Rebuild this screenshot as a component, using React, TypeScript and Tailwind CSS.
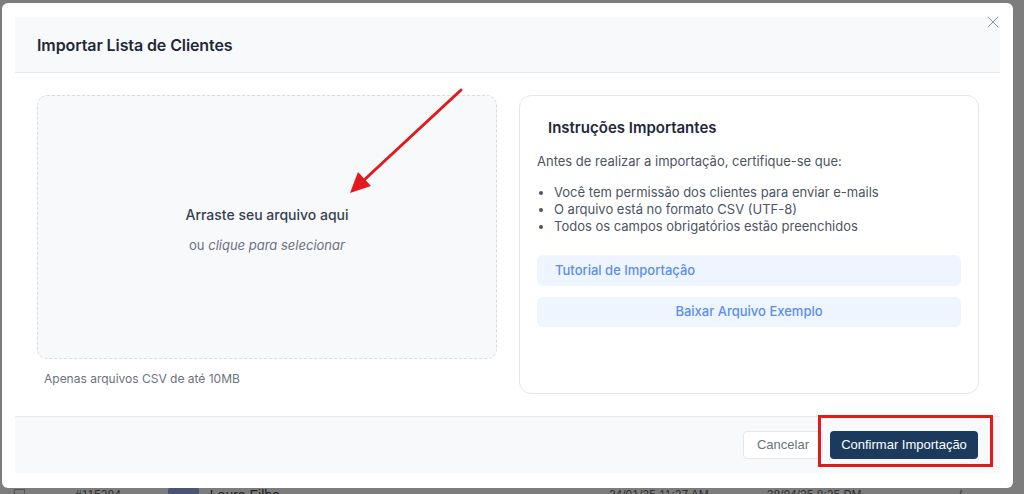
import { X } from "lucide-react";

const REQUISITOS = [
  "Você tem permissão dos clientes para enviar e-mails",
  "O arquivo está no formato CSV (UTF-8)",
  "Todos os campos obrigatórios estão preenchidos",
];

function SetaVermelha() {
  return (
    <svg
      className="absolute left-[340px] top-[80px] pointer-events-none"
      width="130"
      height="120"
      viewBox="0 0 130 120"
    >
      <line x1="119" y1="7" x2="21" y2="98" stroke="#e4191c" strokeWidth="3" strokeLinecap="round" />
      <polygon points="8,110 29,103 16,89" fill="#e4191c" />
    </svg>
  );
}

export default function App() {
  return (
    <div
      className="w-[1024px] h-[494px] overflow-hidden bg-[#7d7d7d] flex flex-col pt-[3px] pl-[2px]"
      style={{ fontFamily: "Inter, 'Noto Sans', sans-serif" }}
    >
      <div className="relative w-[1011px] h-[485px] shrink-0 bg-white rounded-[6px] px-[13px] pt-[14px] flex flex-col">
        {/* cabeçalho */}
        <div className="h-[56px] shrink-0 bg-[#f8f9fb] border-b border-[#e6e9ee] px-[22px] flex items-center">
          <h1 className="text-[16px] font-semibold text-[#1f2937] tracking-[-0.1px]">Importar Lista de Clientes</h1>
        </div>

        <button className="absolute left-[981px] top-[9px] text-[#8f949c]">
          <X size={20} strokeWidth={1.2} />
        </button>

        {/* corpo */}
        <div className="flex gap-[22px] pl-[22px] pr-[21px] py-[22px]">
          <div className="w-[460px] shrink-0 flex flex-col">
            <div className="h-[264px] rounded-[10px] border border-dashed border-[#d7dbe2] bg-[#f8f9fb] flex flex-col items-center justify-center pt-[5px]">
              <p className="text-[14px] leading-[20px] font-medium text-[#374151]">Arraste seu arquivo aqui</p>
              <p className="mt-[10px] text-[13px] leading-[20px] text-[#6b7280]">
                ou <span className="italic">clique para selecionar</span>
              </p>
            </div>
            <p className="mt-[13px] pl-[7px] text-[12px] leading-[14px] text-[#6b7280]">Apenas arquivos CSV de até 10MB</p>
          </div>

          <div className="w-[460px] shrink-0 h-[299px] rounded-[12px] border border-[#e5e7eb] px-[17px] pt-[20px]">
            <h2 className="pl-[11px] text-[15px] leading-[24px] font-semibold text-[#1f2937]">Instruções Importantes</h2>
            <p className="mt-[11px] text-[13px] leading-[20px] text-[#4b5563]">
              Antes de realizar a importação, certifique-se que:
            </p>
            <ul className="mt-[13px] pl-[2px]">
              {REQUISITOS.map((r) => (
                <li key={r} className="flex items-center gap-[11px] text-[13px] leading-[17px] text-[#4b5563]">
                  <span className="w-[4px] h-[4px] rounded-full bg-[#4b5563]" />
                  {r}
                </li>
              ))}
            </ul>
            <button className="mt-[20px] w-full h-[31px] rounded-[6px] bg-[#eef5ff] px-[18px] text-left text-[13px] font-medium text-[#5b8ef0]">
              Tutorial de Importação
            </button>
            <button className="mt-[11px] w-full h-[30px] rounded-[6px] bg-[#eef5ff] text-center text-[13px] font-medium text-[#5b8ef0]">
              Baixar Arquivo Exemplo
            </button>
          </div>
        </div>

        {/* rodapé */}
        <div
          className="h-[57px] shrink-0 bg-[#f8f9fb] border-t border-[#e6e9ee] px-[22px] flex items-center justify-end gap-[7px]"
          style={{ fontFamily: "'Liberation Sans', Arial, sans-serif" }}
        >
          <button className="h-[28px] w-[80px] rounded-[4px] border border-[#e5e7eb] bg-white text-[13px] text-[#6b7280]">
            Cancelar
          </button>
          <button className="h-[28px] w-[148px] rounded-[4px] bg-[#1c3a5e] text-[13px] text-white">
            Confirmar Importação
          </button>
        </div>

        {/* anotações */}
        <div className="absolute left-[816px] top-[412px] w-[175px] h-[52px] border-[3px] border-[#e4191c] pointer-events-none" />
        <SetaVermelha />
      </div>

      {/* tabela ao fundo */}
      <div
        className="h-[6px] overflow-hidden flex items-start text-[12px] leading-[14px] text-[#2f2f2f] whitespace-nowrap"
        style={{ fontFamily: "'Liberation Sans', Arial, sans-serif" }}
      >
        <span className="ml-[12px] mt-[1px] w-[11px] h-[11px] shrink-0 border border-[#555]" />
        <span className="ml-[50px]">#115284</span>
        <span className="ml-[47px] w-[31px] h-[10px] shrink-0 rounded-[2px] bg-[#4b5470]" />
        <span className="ml-[11px] text-[14px] text-[#222]">Lauro Filho</span>
        <span className="ml-[329px]">24/01/25 11:27 AM</span>
        <span className="ml-[58px]">28/04/25 8:25 PM</span>
        <span className="ml-[97px]">/</span>
      </div>
    </div>
  );
}
